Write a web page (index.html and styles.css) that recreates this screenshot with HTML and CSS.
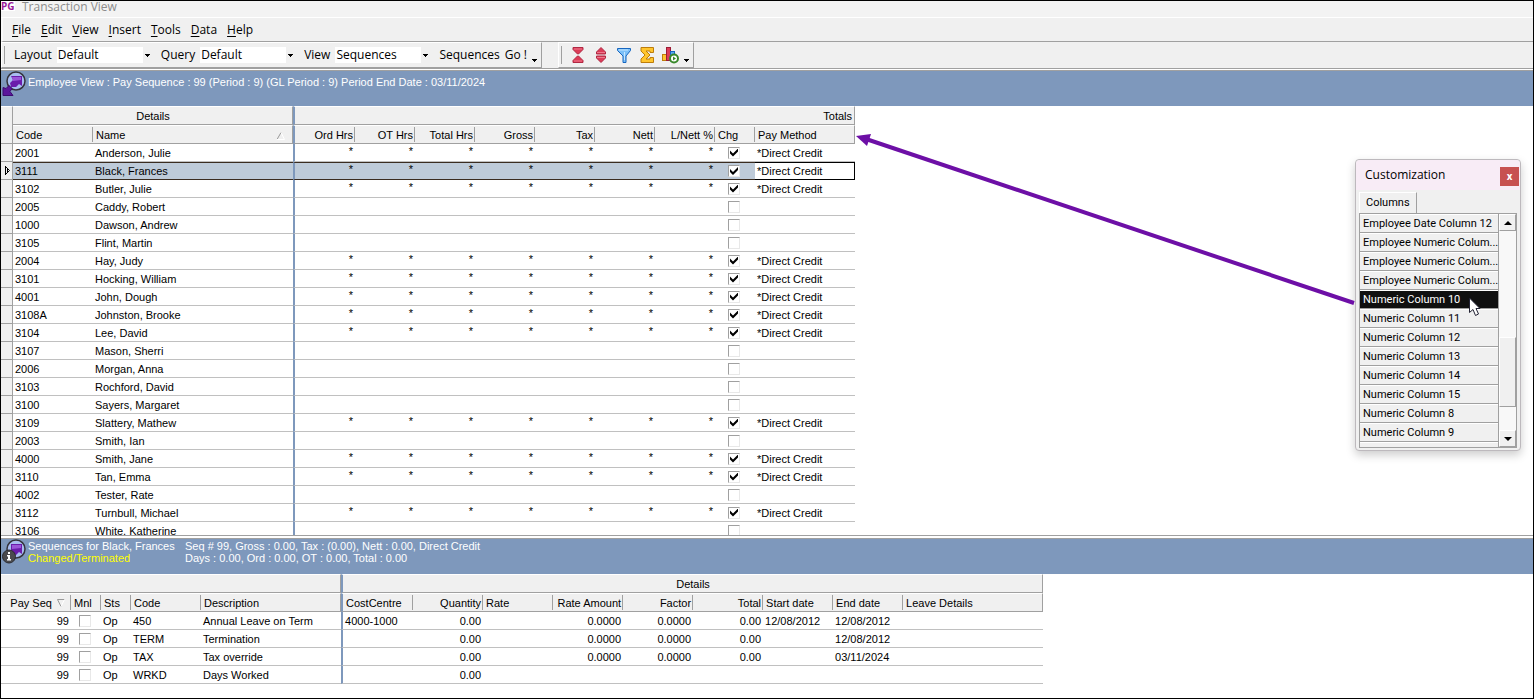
FILE: index.html
```html
<!DOCTYPE html>
<html lang="en">
<head>
<meta charset="UTF-8">
<meta name="viewport" content="width=device-width, initial-scale=1.0">
<title>Transaction View</title>
<link rel="stylesheet" href="styles.css">
</head>
<body>
<header class="titleBar">
  <b class="appIcon">PG</b>
  <h1>Transaction View</h1>
</header>

<nav class="menuBar">
  <button><u>F</u>ile</button>
  <button><u>E</u>dit</button>
  <button><u>V</u>iew</button>
  <button><u>I</u>nsert</button>
  <button><u>T</u>ools</button>
  <button><u>D</u>ata</button>
  <button><u>H</u>elp</button>
</nav>

<div class="toolRow">
  <div class="toolBar">
    <label for="layoutSelect">Layout</label>
    <div class="combo">
      <select id="layoutSelect"><option>Default</option></select>
    </div>
    <label for="querySelect">Query</label>
    <div class="combo">
      <select id="querySelect"><option>Default</option></select>
    </div>
    <label for="viewSelect">View</label>
    <div class="combo">
      <select id="viewSelect"><option>Sequences</option></select>
    </div>
    <button>Sequences</button>
    <button>Go !</button>
    <button class="moreButton" aria-label="More"></button>
  </div>
  <div class="toolBar iconBar">
    <button aria-label="Collapse all">
      <svg width="18" height="18" viewBox="0 0 18 18"><path d="M4 1.500h10v2L9.500 8h-1L4 3.500zM4 16.500h10v-2L9.500 10h-1L4 14.500z" fill="#dc3c58" stroke="#b02843"/><path d="M5 3h8M5 15h8" stroke="#f0788c"/></svg>
    </button>
    <button aria-label="Expand all">
      <svg width="18" height="18" viewBox="0 0 18 18"><path d="M9 1.500L13.500 6v2h-9V6zM9 16.500L13.500 12v-2h-9v2z" fill="#dc3c58" stroke="#b02843"/><path d="M5 6.500h8M5 11.500h8" stroke="#f0788c"/></svg>
    </button>
    <button aria-label="Filter">
      <svg width="18" height="18" viewBox="0 0 18 18"><path d="M2.500 2.500h13v2L11 10v6.500H8V10L2.500 4.500z" fill="#7cc0f8" stroke="#1766c0"/><path d="M4 4h9M9.500 6v8" stroke="#c5e6ff"/></svg>
    </button>
    <button aria-label="Totals">
      <svg width="18" height="18" viewBox="0 0 18 18"><path d="M3 1.500h12.500v5H12V5H8l4 4-4 4h4v-1.500h3.500v5H3V13l4-4-4-4z" fill="#ffc52e" stroke="#bd7d0b"/></svg>
    </button>
    <button aria-label="Run chart">
      <svg width="18" height="18" viewBox="0 0 18 18"><rect x="1.500" y="8.500" width="4" height="6" fill="#ffc52e" stroke="#bd7d0b"/><rect x="5.500" y="1.500" width="4" height="13" fill="#dc3c58" stroke="#9c1c35"/><rect x="9.500" y="5.500" width="4" height="9" fill="#5aa8f0" stroke="#1766c0"/><circle cx="13" cy="12.500" r="4" fill="#fff" stroke="#38882a" stroke-width="2"/><path d="M12 10.500l3 2-3 2z" fill="#38882a"/></svg>
    </button>
    <button class="moreButton" aria-label="More"></button>
  </div>
</div>

<main class="panels">
  <section class="banner">
    <svg class="bannerIcon" width="24" height="26" viewBox="0 0 24 26"><circle cx="14" cy="10" r="9" fill="#a9bdf0" stroke="#34343c" stroke-width="1.500"/><path d="M9 5h11v10l-3-2-3 3H9l-1-4 3-3z" fill="#6a1cab"/><path d="M10 6h9v3l-8 1z" fill="#9a55d8"/><path d="M1 24.500v-8l3 1 3-3 3 3-2 3 3 4z" fill="#5b169b" stroke="#3d0b70"/></svg>
    <p>Employee View : Pay Sequence : 99 (Period : 9) (GL Period : 9) Period End Date : 03/11/2024</p>
  </section>

  <div class="gridArea">
    <table class="grid employeeGrid">
      <colgroup>
        <col class="cMark"><col class="cCode"><col class="cName"><col class="cOrd">
        <col span="6" class="cNum"><col class="cChg"><col class="cPay">
      </colgroup>
      <thead>
        <tr>
          <th rowspan="2" class="mark"></th>
          <th colspan="2" class="group edge">Details</th>
          <th colspan="9" class="group split num edge">Totals</th>
        </tr>
        <tr>
          <th>Code</th>
          <th class="edge"><div class="sortHead">Name <svg width="8" height="8" viewBox="0 0 8 8"><path d="M0 7.500L4 .5" stroke="#999"/><path d="M4 .5L7.500 7.500H0" stroke="#fff" fill="none"/></svg></div></th>
          <th class="split num">Ord Hrs</th>
          <th class="num">OT Hrs</th>
          <th class="num">Total Hrs</th>
          <th class="num">Gross</th>
          <th class="num">Tax</th>
          <th class="num">Nett</th>
          <th class="num">L/Nett %</th>
          <th>Chg</th>
          <th class="edge">Pay Method</th>
        </tr>
      </thead>
      <tbody id="employeeRows"></tbody>
    </table>
  </div>

  <section class="banner sequenceBanner">
    <svg class="bannerIcon" width="24" height="26" viewBox="0 0 24 26"><circle cx="14" cy="10" r="9" fill="#a9bdf0" stroke="#34343c" stroke-width="1.500"/><path d="M9 5h11v10l-3-2-3 3-5-2V9z" fill="#6a1cab"/><path d="M10 6h9v3l-9 1z" fill="#9a55d8"/><circle cx="7" cy="17.500" r="6.500" fill="#4a4a4e" stroke="#2c2c30"/><path d="M6 13h2v2H6zM5 16h3v4h1v1.500H5V20h1v-2.500H5z" fill="#fff"/></svg>
    <div class="bannerName">
      <p>Sequences for Black, Frances</p>
      <p class="status">Changed/Terminated</p>
    </div>
    <div>
      <p>Seq # 99, Gross : 0.00, Tax : (0.00), Nett : 0.00, Direct Credit</p>
      <p>Days : 0.00, Ord : 0.00, OT : 0.00, Total : 0.00</p>
    </div>
  </section>

  <div class="sequenceArea">
    <table class="grid sequenceGrid">
      <colgroup>
        <col class="cSeq"><col class="cSmall"><col class="cSmall"><col class="cSeq"><col class="cDesc">
        <col class="cCost"><col span="7" class="cSeq"><col class="cLeave">
      </colgroup>
      <thead>
        <tr>
          <th colspan="5" class="group edge"></th>
          <th colspan="9" class="group split edge">Details</th>
        </tr>
        <tr>
          <th class="num">Pay Seq <svg class="sortDown" width="8" height="8" viewBox="0 0 8 8"><path d="M7.500 .5H.5L4 7.500" stroke="#999" fill="none"/><path d="M7.500 .5L4 7.500" stroke="#fff"/></svg></th>
          <th>Mnl</th>
          <th>Sts</th>
          <th>Code</th>
          <th class="edge">Description</th>
          <th class="split">CostCentre</th>
          <th class="num">Quantity</th>
          <th>Rate</th>
          <th class="num">Rate Amount</th>
          <th class="num">Factor</th>
          <th class="num">Total</th>
          <th>Start date</th>
          <th>End date</th>
          <th class="edge">Leave Details</th>
        </tr>
      </thead>
      <tbody id="sequenceRows"></tbody>
    </table>
  </div>
</main>

<!-- column chooser, floats over the grid -->
<aside class="customization">
  <div class="dialogTitle">
    <h2>Customization</h2>
    <button class="closeButton" aria-label="Close">x</button>
  </div>
  <button class="tab">Columns</button>
  <div class="columnBox">
    <ul class="columnList">
      <li>Employee Date Column 12</li>
      <li>Employee Numeric Colum...</li>
      <li>Employee Numeric Colum...</li>
      <li>Employee Numeric Colum...</li>
      <li class="selected">Numeric Column 10</li>
      <li>Numeric Column 11</li>
      <li>Numeric Column 12</li>
      <li>Numeric Column 13</li>
      <li>Numeric Column 14</li>
      <li>Numeric Column 15</li>
      <li>Numeric Column 8</li>
      <li>Numeric Column 9</li>
      <li></li>
    </ul>
    <div class="scrollBar">
      <button aria-label="Scroll up"><svg width="8" height="4"><path d="M0 4l4-4 4 4z"/></svg></button>
      <div class="thumb"></div>
      <button aria-label="Scroll down"><svg width="8" height="4"><path d="M0 0h8L4 4z"/></svg></button>
    </div>
  </div>
  <svg class="pointer" width="14" height="20" viewBox="0 0 14 20"><path d="M1.500 1v14.500l3.500-3 2.500 6 3-1.500-2.500-5.500H12z" fill="#fff" stroke="#223"/></svg>
  <svg class="arrow" width="500" height="172" viewBox="0 0 500 172"><path d="M10 6L498 170" stroke="#6d0fa6" stroke-width="4"/><path d="M0 3L15 1L11 13z" fill="#6d0fa6"/></svg>
</aside>

<script>
const employees = [
  ['2001', 'Anderson, Julie', true],
  ['3111', 'Black, Frances', true],
  ['3102', 'Butler, Julie', true],
  ['2005', 'Caddy, Robert', false],
  ['1000', 'Dawson, Andrew', false],
  ['3105', 'Flint, Martin', false],
  ['2004', 'Hay, Judy', true],
  ['3101', 'Hocking, William', true],
  ['4001', 'John, Dough', true],
  ['3108A', 'Johnston, Brooke', true],
  ['3104', 'Lee, David', true],
  ['3107', 'Mason, Sherri', false],
  ['2006', 'Morgan, Anna', false],
  ['3103', 'Rochford, David', false],
  ['3100', 'Sayers, Margaret', false],
  ['3109', 'Slattery, Mathew', true],
  ['2003', 'Smith, Ian', false],
  ['4000', 'Smith, Jane', true],
  ['3110', 'Tan, Emma', true],
  ['4002', 'Tester, Rate', false],
  ['3112', 'Turnbull, Michael', true],
  ['3106', 'White, Katherine', false]
];

const sequences = [
  ['450', 'Annual Leave on Term', '4000-1000', '0.00', '', '0.0000', '0.0000', '0.00', '12/08/2012', '12/08/2012'],
  ['TERM', 'Termination', '', '0.00', '', '0.0000', '0.0000', '0.00', '', '12/08/2012'],
  ['TAX', 'Tax override', '', '0.00', '', '0.0000', '0.0000', '0.00', '', '03/11/2024'],
  ['WRKD', 'Days Worked', '', '0.00', '', '', '', '', '', '']
];

const marker = '<svg width="6" height="9" viewBox="0 0 6 9"><path d="M.5 0v9M.5 .5l4 4-4 4M2.500 3v3" stroke="#000" fill="none"/></svg>';

document.getElementById('employeeRows').innerHTML = employees.map(([code, name, changed]) => {
  const current = code === '3111';
  const star = changed ? '*' : '';
  return `<tr${current ? ' class="current"' : ''}>
    <td class="mark">${current ? marker : ''}</td>
    <td>${code}</td>
    <td>${name}</td>
    <td class="split num star">${star}</td>
    ${`<td class="num star">${star}</td>`.repeat(6)}
    <td class="check"><input type="checkbox" aria-label="Changed ${name}"${changed ? ' checked' : ''}></td>
    <td>${changed ? '*Direct Credit' : ''}</td>
  </tr>`;
}).join('');

document.getElementById('sequenceRows').innerHTML = sequences.map((s) => `<tr>
    <td class="num">99</td>
    <td class="check"><input type="checkbox" aria-label="Manual ${s[0]}"></td>
    <td>Op</td>
    <td>${s[0]}</td>
    <td>${s[1]}</td>
    <td class="split">${s[2]}</td>
    <td class="num">${s[3]}</td>
    <td>${s[4]}</td>
    <td class="num">${s[5]}</td>
    <td class="num">${s[6]}</td>
    <td class="num">${s[7]}</td>
    <td>${s[8]}</td>
    <td>${s[9]}</td>
    <td></td>
  </tr>`).join('');
</script>
</body>
</html>
```
FILE: styles.css
```css
* {
  box-sizing: border-box;
}

body {
  margin: 0;
  height: 100vh;
  border: 1px solid #000;
  display: flex;
  flex-direction: column;
  overflow: hidden;
  position: relative;
  background: #fff;
  color: #000;
  font-family: "Liberation Sans", Arial, sans-serif;
  font-size: 11px;
}

h1, h2, p, ul {
  margin: 0;
  padding: 0;
  font-weight: normal;
}

button {
  border: none;
  padding: 0;
  background: none;
  color: inherit;
  font: inherit;
}

svg {
  display: block;
  flex: none;
}

/* title, menu and tool bars */
.titleBar {
  height: 17px;
  display: flex;
  align-items: flex-start;
  gap: 7px;
  background: #f3f3f3;
  border-bottom: 1px solid #fff;
}

.titleBar h1 {
  font: 12px/11px "Open Sans", sans-serif;
  color: #8c8c8c;
}

.appIcon {
  width: 14px;
  background: #fff;
  color: #9a1a9a;
  font: bold 10px/10px "Open Sans", sans-serif;
}

.menuBar {
  height: 24px;
  display: flex;
  align-items: center;
  gap: 10px;
  padding-left: 9px;
  background: #f0f0f0;
  border-left: 2px solid #f8f8f8;
  border-bottom: 1px solid #a0a0a0;
  font: 12px/16px "Open Sans", sans-serif;
}

.menuBar u {
  text-underline-offset: 2px;
}

.toolRow {
  height: 27px;
  margin-bottom: 1px;
  display: flex;
  gap: 16px;
  background: #f0f0f0;
  border-bottom: 1px solid #a0a0a0;
  font: 12px/16px "Open Sans", sans-serif;
}

.toolBar {
  display: flex;
  align-items: center;
  gap: 5px;
  padding: 0 4px 0 12px;
  border: 1px solid #fff;
  border-right-color: #a0a0a0;
  border-bottom-color: #a0a0a0;
  position: relative;
}

.toolBar::before {
  content: "";
  position: absolute;
  left: 2px;
  top: 3px;
  bottom: 3px;
  border-left: 1px solid #a0a0a0;
}

.combo {
  position: relative;
  width: 95px;
  height: 16px;
  margin-right: 4px;
  background: #fff;
}

.combo::after {
  content: "";
  position: absolute;
  right: 0;
  top: 0;
  width: 9px;
  height: 16px;
  background: linear-gradient(#000, #000) 2px 7px / 5px 1px no-repeat, linear-gradient(#000, #000) 3px 8px / 3px 1px no-repeat, linear-gradient(#000, #000) 4px 9px / 1px 1px no-repeat, #f0f0f0;
  pointer-events: none;
}

.combo select {
  appearance: none;
  display: block;
  width: 100%;
  height: 16px;
  border: none;
  padding: 0 0 0 1px;
  background: none;
  color: #000;
  font: 12px/14px "Open Sans", sans-serif;
}

.moreButton {
  align-self: flex-end;
  width: 5px;
  height: 9px;
  background: linear-gradient(#000, #000) 0 1px / 5px 1px no-repeat, linear-gradient(#000, #000) 1px 2px / 3px 1px no-repeat, linear-gradient(#000, #000) 2px 3px / 1px 1px no-repeat;
}

.iconBar {
  padding-left: 10px;
}

/* panels */
.panels {
  flex: 1;
  min-height: 0;
  display: flex;
  flex-direction: column;
  border-top: 1px solid #a0a0a0;
}

.banner {
  flex: none;
  display: flex;
  gap: 2px;
  height: 35px;
  padding-left: 1px;
  background: #7e98bc;
  color: #fff;
  line-height: 12px;
}

.banner > p {
  padding-top: 5px;
}

.sequenceBanner {
  border-top: 1px solid #a0a0a0;
  height: 36px;
}

.sequenceBanner > div {
  padding-top: 1px;
}

.bannerName {
  width: 155px;
}

.status {
  color: #ff0;
}

.gridArea {
  flex: 1;
  min-height: 0;
  overflow: hidden;
  margin-bottom: 2px;
  border-bottom: 1px solid #a0a0a0;
}

.sequenceArea {
  flex: none;
  padding-bottom: 14px;
}

.grid {
  table-layout: fixed;
  border-collapse: separate;
  border-spacing: 0;
  line-height: 13px;
}

.employeeGrid { width: 854px; }
.sequenceGrid { width: 1042px; }
.cMark { width: 12px; }
.cCode { width: 80px; }
.cName { width: 200px; }
.cOrd { width: 62px; }
.cNum { width: 60px; }
.cChg { width: 40px; }
.cPay { width: 100px; }
.cSeq { width: 70px; }
.cSmall { width: 30px; }
.cDesc { width: 140px; }
.cCost { width: 72px; }
.cLeave { width: 140px; }

.grid th,
.grid td {
  padding: 2px 2px 0;
  text-align: left;
  font-weight: normal;
  white-space: nowrap;
  overflow: hidden;
}

.grid th {
  height: 19px;
  padding: 2px 2px 0 3px;
  background: linear-gradient(#a0a0a0, #a0a0a0) right center / 1px 15px no-repeat #f0f0f0;
  border-top: 1px solid #fff;
  border-bottom: 1px solid #a0a0a0;
}

.grid th.group {
  background: #f0f0f0;
  text-align: center;
}

.grid th.edge {
  background: #f0f0f0;
  border-right: 1px solid #a0a0a0;
}

.grid td {
  height: 18px;
  border-bottom: 1px solid #c0c0c0;
}

.grid th.num,
.grid td.num {
  text-align: right;
}

.grid td.star {
  padding-top: 1px;
  vertical-align: top;
}

.grid .split {
  border-left: 2px solid #7e98bc;
}

.grid .mark {
  padding: 0 0 0 4px;
  background: #f0f0f0;
  border-right: 1px solid #a0a0a0;
}

.grid td.mark {
  border-bottom-color: #a0a0a0;
}

.grid td.check {
  padding: 0 2px 0 0;
}

.sortHead {
  display: flex;
  align-items: center;
  justify-content: space-between;
  padding-right: 5px;
}

.sortDown {
  display: inline-block;
  margin: 0 4px 0 2px;
}

.grid .current td {
  padding-top: 0;
  background: #becbd9;
  border-top: 1px solid #3a2c20;
  border-bottom-color: #3a2c20;
}

.grid .current td.mark {
  background: #f0f0f0;
  border-top: none;
  border-bottom-color: #a0a0a0;
}

.grid .current td:last-child {
  background: #fff;
  border: 1px solid #000;
  border-left: none;
}

input[type="checkbox"] {
  appearance: none;
  display: block;
  width: 12px;
  height: 12px;
  margin: 0 auto;
  background: #fff;
  border: 1px solid #e8e8e8;
  border-top-color: #a0a0a0;
  border-left-color: #a0a0a0;
}

input[type="checkbox"]:checked::after {
  content: "";
  display: block;
  width: 8px;
  height: 8px;
  margin: 1px;
  background: #000;
  clip-path: polygon(0 2px, 3px 5px, 8px 0, 8px 3px, 3px 8px, 0 5px);
}

/* customization window */
.customization {
  position: absolute;
  top: 158px;
  right: 12px;
  width: 166px;
  padding: 0 3px 2px;
  background: #f0f0f0;
  border: 1px solid #bdb9bd;
  border-radius: 4px;
  box-shadow: 0 4px 10px rgba(0, 0, 0, 0.2);
  font-family: Roboto, sans-serif;
}

.dialogTitle {
  display: flex;
  justify-content: space-between;
  height: 30px;
  margin: 0 -3px 2px;
  padding: 7px 1px 0 9px;
  background: #f8ecf6;
  border-radius: 4px 4px 0 0;
}

.dialogTitle h2 {
  font: 12px/16px "Open Sans", sans-serif;
}

.closeButton {
  width: 19px;
  height: 19px;
  background: #c75050;
  color: #fff;
  font-weight: bold;
}

.tab {
  display: block;
  height: 21px;
  padding: 0 6px 2px 6px;
  border: 1px solid #fff;
  border-right-color: #a0a0a0;
  border-bottom: none;
}

.columnBox {
  display: flex;
  height: 235px;
  border: 1px solid #a0a0a0;
}

.columnList {
  flex: 1;
  min-width: 0;
  overflow: hidden;
  list-style: none;
}

.columnList li {
  height: 19px;
  padding-left: 3px;
  line-height: 18px;
  border-top: 1px solid #fff;
  border-bottom: 1px solid #a0a0a0;
  white-space: nowrap;
}

.columnList .selected {
  background: #101010;
  color: #fff;
}

.scrollBar {
  width: 18px;
  display: flex;
  flex-direction: column;
  justify-content: space-between;
  background: #f8f8f8;
  border-left: 1px solid #a0a0a0;
}

.scrollBar button {
  display: flex;
  align-items: center;
  justify-content: center;
  height: 17px;
}

.scrollBar button,
.thumb {
  background: #f0f0f0;
  border: 1px solid #fff;
  border-right-color: #a0a0a0;
  border-bottom-color: #a0a0a0;
}

.thumb {
  height: 70px;
  margin-top: 82px;
}

.pointer {
  position: absolute;
  top: 137px;
  left: 112px;
}

.arrow {
  position: absolute;
  top: -27px;
  right: 164px;
}
```
